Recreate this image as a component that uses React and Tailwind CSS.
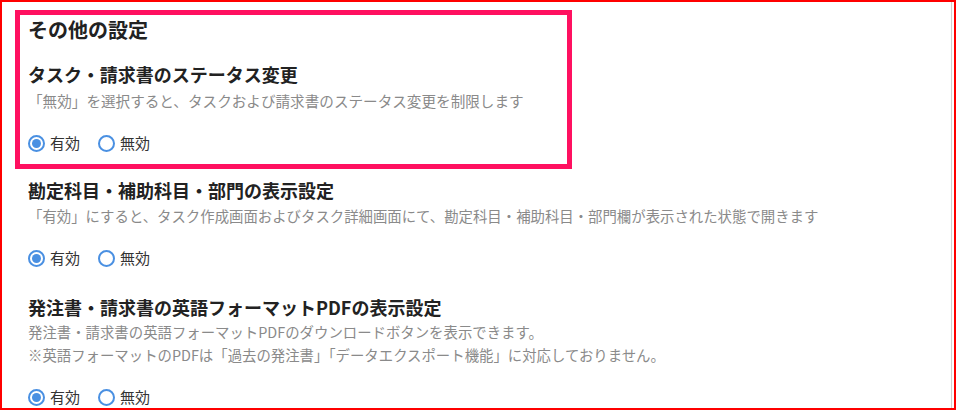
import { useState } from "react";

const FONT = { fontFamily: '"Noto Sans CJK JP", "Noto Sans", sans-serif' };

function Radio({ name, value, checked, onChange, label }) {
  return (
    <label className="flex items-center cursor-pointer" onClick={() => onChange(value)}>
      <span
        className={
          "w-[17px] h-[17px] rounded-full border-2 border-[#4a90e2] flex items-center justify-center bg-white"
        }
      >
        {checked && <span className="w-[9px] h-[9px] rounded-full bg-[#4a90e2]" />}
      </span>
      <span className="ml-[5px] text-[15px] leading-[20px] text-[#333]">{label}</span>
      <input type="radio" name={name} className="hidden" readOnly checked={checked} />
    </label>
  );
}

function RadioRow({ name, value, onChange, className }) {
  return (
    <div className={"flex items-center gap-[18px] h-[20px] " + className}>
      <Radio name={name} value="on" checked={value === "on"} onChange={onChange} label="有効" />
      <Radio name={name} value="off" checked={value === "off"} onChange={onChange} label="無効" />
    </div>
  );
}

export default function App() {
  const [status, setStatus] = useState("on");
  const [account, setAccount] = useState("on");
  const [pdf, setPdf] = useState("on");

  return (
    <div
      className="w-[956px] h-[410px] border-2 border-[#ff0000] bg-white overflow-hidden"
      style={FONT}
    >
      <div className="h-full w-[950px] border-r border-[#d0d0d0] pl-[13px] pt-[8px]">
        {/* highlighted block */}
        <div className="w-[557px] h-[159px] border-[5px] border-[#ff1060] px-[8px] pt-[1px]">
          <h2 className="text-[20px] leading-[28px] font-bold text-[#222]">その他の設定</h2>
          <h3 className="mt-[17px] text-[18px] leading-[26px] font-bold text-[#222]">
            タスク・請求書のステータス変更
          </h3>
          <p className="mt-[2px] text-[14.6px] leading-[23px] text-[#8a8a8a] whitespace-nowrap">
            「無効」を選択すると、タスクおよび請求書のステータス変更を制限します
          </p>
          <RadioRow name="status" value={status} onChange={setStatus} className="mt-[21px]" />
        </div>

        <div className="pl-[13px]">
          <h3 className="mt-[8px] text-[18px] leading-[26px] font-bold text-[#222]">
            勘定科目・補助科目・部門の表示設定
          </h3>
          <p className="mt-[1px] text-[14.4px] leading-[23px] text-[#8a8a8a] whitespace-nowrap">
            「有効」にすると、タスク作成画面およびタスク詳細画面にて、勘定科目・補助科目・部門欄が表示された状態で開きます
          </p>
          <RadioRow name="account" value={account} onChange={setAccount} className="mt-[21px]" />

          <h3 className="mt-[26px] text-[18px] leading-[26px] font-bold text-[#222]">
            発注書・請求書の英語フォーマットPDFの表示設定
          </h3>
          <p className="text-[14.4px] leading-[23px] text-[#8a8a8a] whitespace-nowrap">
            発注書・請求書の英語フォーマットPDFのダウンロードボタンを表示できます。
            <br />
            ※英語フォーマットのPDFは「過去の発注書」「データエクスポート機能」に対応しておりません。
          </p>
          <RadioRow name="pdf" value={pdf} onChange={setPdf} className="mt-[21px]" />
        </div>
      </div>
    </div>
  );
}
